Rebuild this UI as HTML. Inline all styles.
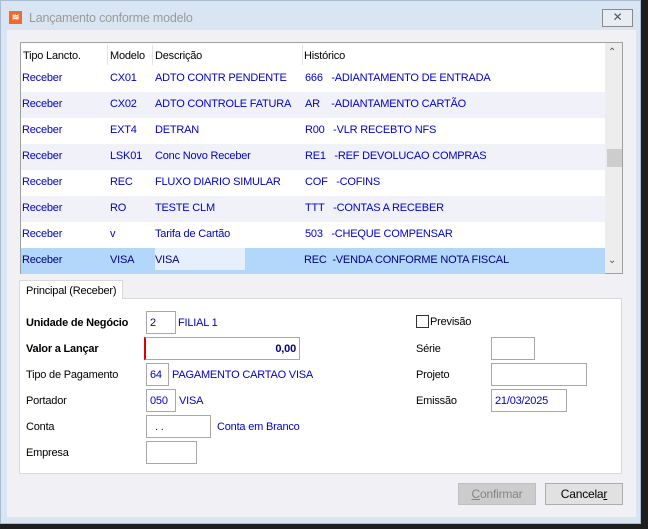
<!DOCTYPE html>
<html><head><meta charset="utf-8"><style>
*{margin:0;padding:0;box-sizing:border-box}
body{width:648px;height:529px;background:#1e1e1e;font-family:"Liberation Sans",sans-serif;font-size:11px;color:#000;position:relative;overflow:hidden;letter-spacing:-0.2px;white-space:nowrap}
.a{position:absolute}
.win{left:0;top:0;width:641px;height:524px;background:#d9e5f2;border:1px solid #a9bccf}
.content{left:7px;top:30px;width:629px;height:487px;background:#f0f0f5}
.grid{left:20px;top:42px;width:603px;height:232px;background:#fff;border:1px solid #a0a0a0}
.row{position:absolute;left:0;width:584px;height:26px;color:#0000cc}
.row span{position:absolute;top:6px}
.inp{position:absolute;background:#fff;border:1px solid #a8a8a8;height:23px;font-size:11px;color:#0000cc;padding:5px 3px}
.lbl{position:absolute;font-size:11px}
.blue{color:#0000cc}
.btn{position:absolute;height:22px;border:1px solid #adadad;background:#e1e1e1;text-align:center;line-height:20px;font-size:12px}
</style></head><body>
<div class="a win"></div>
<div class="a" style="left:9px;top:11px;width:13px;height:13px;background:#f06a2a;color:#fff;font-size:9px;line-height:13px;text-align:center;font-weight:bold">≋</div>
<div class="a" style="left:29px;top:11px;font-size:12.5px;color:#9a9a9a">Lançamento conforme modelo</div>
<div class="a" style="left:602px;top:9px;width:31px;height:18px;border:1px solid #8a8a8a;background:#e8edf3;text-align:center;font-size:12px;line-height:15px;color:#555">✕</div>
<div class="a content"></div>
<div class="a grid">
 <div class="a" style="left:0;top:0;width:584px;height:23px;background:#fff"></div>
 <div class="lbl" style="left:2px;top:7px">Tipo Lancto.</div>
 <div class="lbl" style="left:89px;top:7px">Modelo</div>
 <div class="lbl" style="left:134px;top:7px">Descrição</div>
 <div class="lbl" style="left:283px;top:7px">Histórico</div>
 <div class="a" style="left:86px;top:2px;width:1px;height:20px;background:#e4e4e4"></div>
 <div class="a" style="left:131px;top:2px;width:1px;height:20px;background:#e4e4e4"></div>
 <div class="a" style="left:281px;top:2px;width:1px;height:20px;background:#e4e4e4"></div>

 <div class="row" style="top:23px;background:#fff"><span style="left:1px">Receber</span><span style="left:89px">CX01</span><span style="left:134px">ADTO CONTR PENDENTE</span><span style="left:284px">666&nbsp;&nbsp; -ADIANTAMENTO DE ENTRADA</span></div>
 <div class="row" style="top:49px;background:#f1f2f9"><span style="left:1px">Receber</span><span style="left:89px">CX02</span><span style="left:134px">ADTO CONTROLE FATURA</span><span style="left:284px">AR&nbsp;&nbsp;&nbsp; -ADIANTAMENTO CARTÃO</span></div>
 <div class="row" style="top:75px;background:#fff"><span style="left:1px">Receber</span><span style="left:89px">EXT4</span><span style="left:134px">DETRAN</span><span style="left:284px">R00&nbsp;&nbsp; -VLR RECEBTO NFS</span></div>
 <div class="row" style="top:101px;background:#f1f2f9"><span style="left:1px">Receber</span><span style="left:89px">LSK01</span><span style="left:134px">Conc Novo Receber</span><span style="left:284px">RE1&nbsp;&nbsp; -REF DEVOLUCAO COMPRAS</span></div>
 <div class="row" style="top:127px;background:#fff"><span style="left:1px">Receber</span><span style="left:89px">REC</span><span style="left:134px">FLUXO DIARIO SIMULAR</span><span style="left:284px">COF&nbsp;&nbsp; -COFINS</span></div>
 <div class="row" style="top:153px;background:#f1f2f9"><span style="left:1px">Receber</span><span style="left:89px">RO</span><span style="left:134px">TESTE CLM</span><span style="left:284px">TTT&nbsp;&nbsp; -CONTAS A RECEBER</span></div>
 <div class="row" style="top:179px;background:#fff"><span style="left:1px">Receber</span><span style="left:89px">v</span><span style="left:134px">Tarifa de Cartão</span><span style="left:284px">503&nbsp;&nbsp; -CHEQUE COMPENSAR</span></div>
 <div class="row" style="top:205px;background:#b3d7fb;color:#000080"><div class="a" style="left:134px;top:0;width:90px;height:22px;background:#e5f0fc"></div><span style="left:1px">Receber</span><span style="left:89px">VISA</span><span style="left:134px">VISA</span><span style="left:283px">REC&nbsp; -VENDA CONFORME NOTA FISCAL</span></div>

 <div class="a" style="left:584px;top:0;width:17px;height:230px;background:#ededed"></div>
 <div class="a" style="left:587px;top:4px;font-size:10px;color:#555">⌃</div>
 <div class="a" style="left:586px;top:106px;width:15px;height:18px;background:#cdcdcd"></div>
 <div class="a" style="left:587px;top:212px;font-size:10px;color:#555">⌄</div>
</div>

<div class="a" style="left:19px;top:298px;width:603px;height:176px;background:#fff;border:1px solid #d9d9d9"></div>
<div class="a" style="left:19px;top:280px;width:104px;height:19px;background:#fff;border:1px solid #d9d9d9;border-bottom:none;font-size:11px;padding:4px 0 0 6px">Principal (Receber)</div>

<div class="lbl" style="left:26px;top:317px;font-weight:bold">Unidade de Negócio</div>
<div class="inp" style="left:146px;top:311px;width:30px">2</div>
<div class="lbl blue" style="left:178px;top:317px">FILIAL 1</div>

<div class="lbl" style="left:26px;top:343px;font-weight:bold">Valor a Lançar</div>
<div class="inp" style="left:144px;top:337px;width:156px;border-left:2px solid #e00000;text-align:right;font-weight:bold;color:#000080">0,00</div>

<div class="lbl" style="left:26px;top:369px">Tipo de Pagamento</div>
<div class="inp" style="left:146px;top:363px;width:23px">64</div>
<div class="lbl blue" style="left:172px;top:369px">PAGAMENTO CARTAO VISA</div>

<div class="lbl" style="left:26px;top:395px">Portador</div>
<div class="inp" style="left:146px;top:389px;width:30px">050</div>
<div class="lbl blue" style="left:179px;top:395px">VISA</div>

<div class="lbl" style="left:26px;top:421px">Conta</div>
<div class="inp" style="left:146px;top:415px;width:65px;padding-left:8px">. .</div>
<div class="lbl blue" style="left:217px;top:421px">Conta em Branco</div>

<div class="lbl" style="left:26px;top:447px">Empresa</div>
<div class="inp" style="left:146px;top:441px;width:51px"></div>

<div class="a" style="left:416px;top:315px;width:13px;height:13px;border:1px solid #333;background:#fff"></div>
<div class="lbl" style="left:430px;top:316px">Previsão</div>
<div class="lbl" style="left:416px;top:343px">Série</div>
<div class="inp" style="left:491px;top:337px;width:44px"></div>
<div class="lbl" style="left:416px;top:369px">Projeto</div>
<div class="inp" style="left:491px;top:363px;width:96px"></div>
<div class="lbl" style="left:416px;top:395px">Emissão</div>
<div class="inp" style="left:491px;top:389px;width:76px">21/03/2025</div>

<div class="btn" style="left:458px;top:483px;width:78px;background:#cccccc;border-color:#bfbfbf;color:#838383"><u>C</u>onfirmar</div>
<div class="btn" style="left:545px;top:483px;width:78px">Cancela<u>r</u></div>
</body></html>
